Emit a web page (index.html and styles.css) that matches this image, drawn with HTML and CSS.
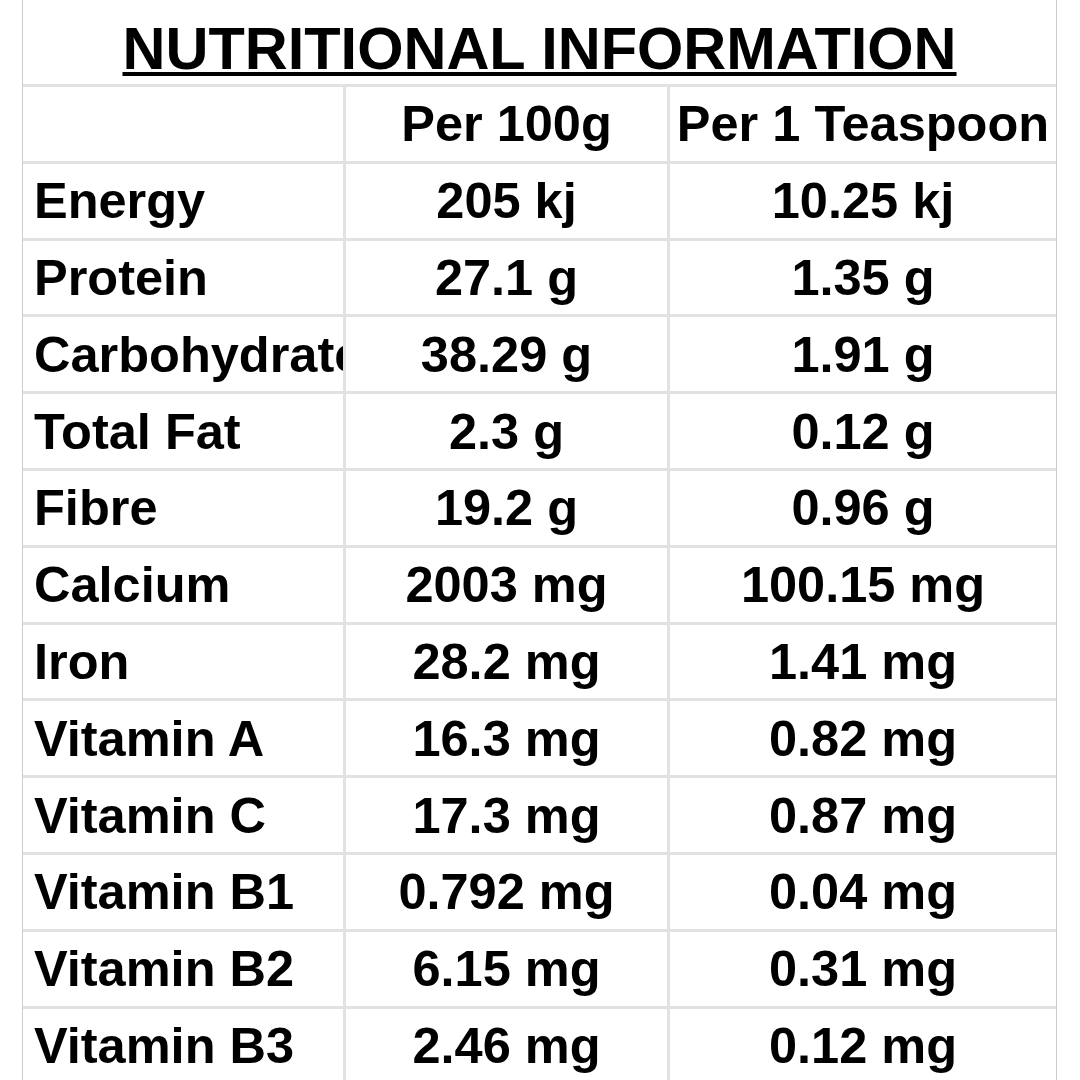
FILE: index.html
```html
<!DOCTYPE html>
<html lang="en">
<head>
<meta charset="utf-8">
<title>Nutritional Information</title>
<link rel="stylesheet" href="styles.css">
</head>
<body>
<div class="sheet">
  <div class="title"><span class="title-text">NUTRITIONAL INFORMATION</span></div>
  <div class="cell"></div>
  <div class="cell num">Per 100g</div>
  <div class="cell num">Per 1 Teaspoon</div>

  <div class="cell label">Energy</div><div class="cell num">205 kj</div><div class="cell num">10.25 kj</div>
  <div class="cell label">Protein</div><div class="cell num">27.1 g</div><div class="cell num">1.35 g</div>
  <div class="cell label">Carbohydrate</div><div class="cell num">38.29 g</div><div class="cell num">1.91 g</div>
  <div class="cell label">Total Fat</div><div class="cell num">2.3 g</div><div class="cell num">0.12 g</div>
  <div class="cell label">Fibre</div><div class="cell num">19.2 g</div><div class="cell num">0.96 g</div>
  <div class="cell label">Calcium</div><div class="cell num">2003 mg</div><div class="cell num">100.15 mg</div>
  <div class="cell label">Iron</div><div class="cell num">28.2 mg</div><div class="cell num">1.41 mg</div>
  <div class="cell label">Vitamin A</div><div class="cell num">16.3 mg</div><div class="cell num">0.82 mg</div>
  <div class="cell label">Vitamin C</div><div class="cell num">17.3 mg</div><div class="cell num">0.87 mg</div>
  <div class="cell label">Vitamin B1</div><div class="cell num">0.792 mg</div><div class="cell num">0.04 mg</div>
  <div class="cell label">Vitamin B2</div><div class="cell num">6.15 mg</div><div class="cell num">0.31 mg</div>
  <div class="cell label">Vitamin B3</div><div class="cell num">2.46 mg</div><div class="cell num">0.12 mg</div>
</div>
</body>
</html>
```

FILE: styles.css
```css
html, body {
  margin: 0;
  padding: 0;
  background: #ffffff;
  overflow: hidden;
}

body {
  font-family: "Liberation Sans", Arial, sans-serif;
  color: #000000;
}

.sheet {
  margin-left: 22px;
  width: 1033px;
  border-left: 1px solid #cdcdcd;
  border-right: 1px solid #cdcdcd;
  display: grid;
  grid-template-columns: 320px 321px 386px;
  grid-auto-rows: 73.8px;
  grid-template-rows: 84px;
  gap: 3px;
  background: #e2e2e2;
}

.title {
  grid-column: 1 / -1;
  background: #ffffff;
  text-align: center;
  font-weight: bold;
  font-size: 59.5px;
  padding-top: 14px;
  box-sizing: border-box;
  height: 84px;
  white-space: nowrap;
}

.title-text {
  text-decoration: underline;
  text-decoration-thickness: 4px;
  text-underline-offset: 3px;
}

.cell {
  background: #ffffff;
  display: flex;
  align-items: center;
  font-weight: bold;
  font-size: 50.5px;
  white-space: nowrap;
  overflow: hidden;
}

.label {
  padding-left: 11px;
}

.num {
  justify-content: center;
}
```
